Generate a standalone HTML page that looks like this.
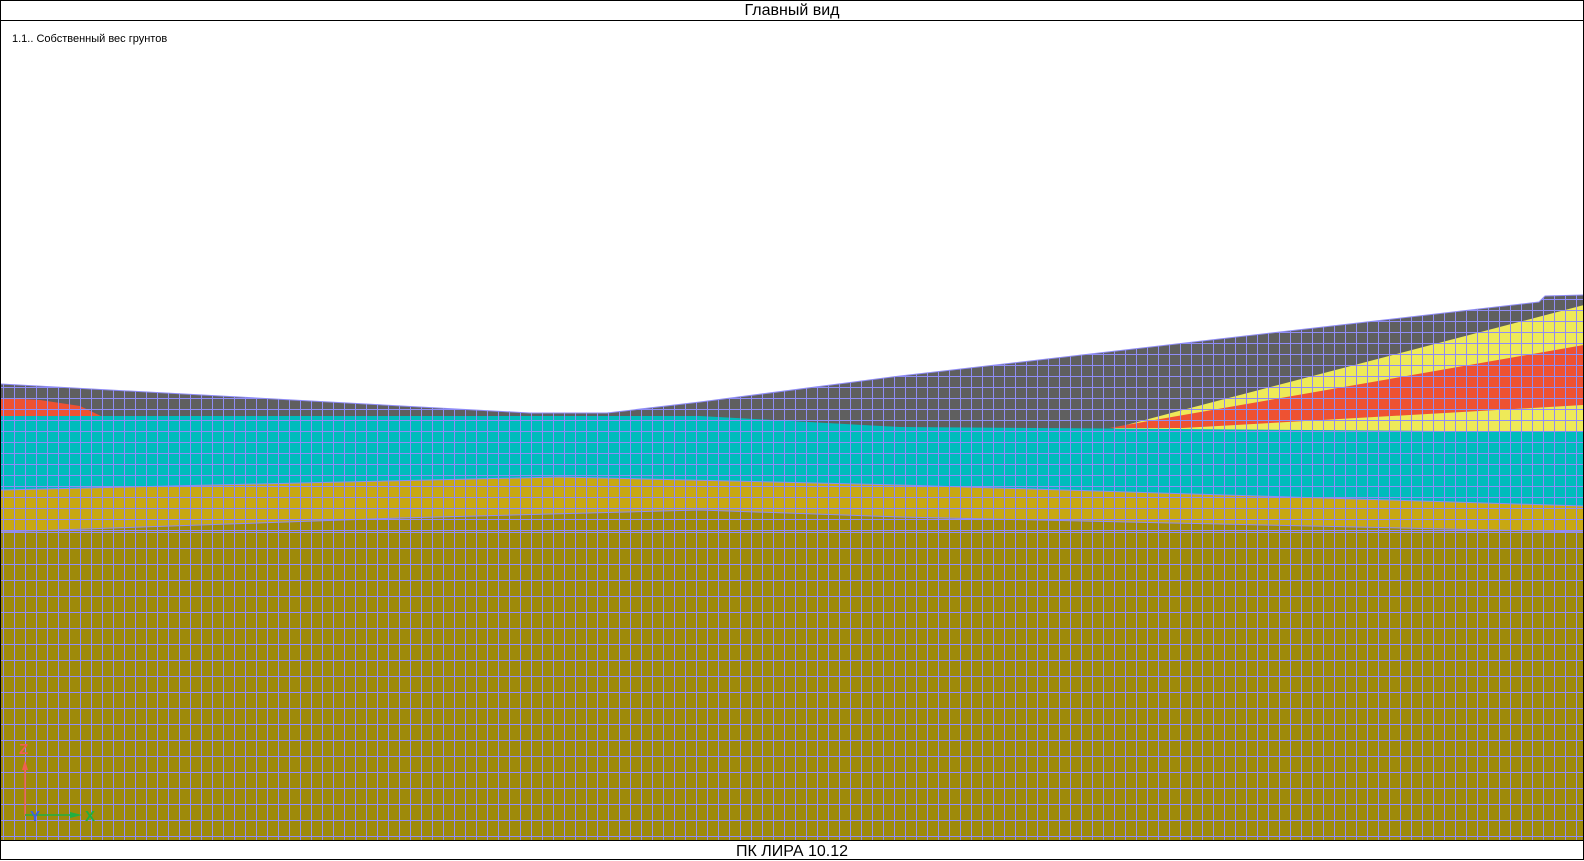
<!DOCTYPE html>
<html><head><meta charset="utf-8"><style>
html,body{margin:0;padding:0;background:#fff;}
body{width:1584px;height:860px;overflow:hidden;position:relative;font-family:"Liberation Sans",sans-serif;}
svg{position:absolute;left:0;top:0;}
.t{position:absolute;left:0;width:1584px;text-align:center;font-size:16px;color:#000;}
</style></head><body>
<svg width="1584" height="860" viewBox="0 0 1584 860">
<defs>
<pattern id="g" width="11" height="11" patternUnits="userSpaceOnUse" x="3" y="2">
<path d="M0.5 0V11M0 0.5H11" stroke="#8f8cf6" stroke-width="1" fill="none"/>
</pattern>
<pattern id="g2" width="11" height="16" patternUnits="userSpaceOnUse" x="3" y="4">
<path d="M0.5 0V16M0 0.5H11" stroke="#8f8cf6" stroke-width="1" fill="none"/>
</pattern>
<clipPath id="soil"><path d="M1 384 L530 413 L607 413 L700 402 L900 376 L1539 302 L1545 296 L1583 295 L1583 840 L1 840Z"/></clipPath>
</defs>
<rect x="0" y="0" width="1584" height="860" fill="#fff"/>
<g clip-path="url(#soil)">
<rect x="0" y="280" width="1584" height="560" fill="#5f5f5f"/>
<path d="M0 398 L40 400 L80 406 L103 417 L0 417Z" fill="#ee5232"/>
<path d="M1175 412 L1584 305 L1584 432 L1100 432Z" fill="#eeea58"/>
<path d="M1109 428 L1584 345 L1584 405 L1183 428Z" fill="#ee5232"/>
<path d="M0 416 L700 416 L900 427 L1584 432 L1584 506 L900 485 L560 477 L300 483 L0 490Z" fill="#00bcbc"/>
<path d="M0 490 L300 483 L560 477 L900 485 L1584 506 L1584 532 L900 517 L700 510 L400 518 L0 532Z" fill="#c8a812"/>
<path d="M0 532 L400 518 L700 510 L900 517 L1584 532 L1584 840 L0 840Z" fill="#9e8a0a"/>
<rect x="0" y="280" width="1584" height="252" fill="url(#g)"/>
<rect x="0" y="520" width="1584" height="320" fill="url(#g2)"/>
<path d="M0 532 L400 518 L700 510 L900 517 L1584 532" stroke="#8f8cf6" fill="none"/>
<path d="M0 490 L300 483 L560 477 L900 485 L1584 506" stroke="#8f8cf6" fill="none"/>
</g>
<path d="M1 384 L530 413 L607 413 L700 402 L900 376 L1539 302 L1545 296 L1583 295" stroke="#8f8cf6" fill="none"/>
<line x1="25" y1="816" x2="25" y2="765" stroke="#f06050" stroke-width="1.5"/>
<path d="M22 770 L25 760 L28 770Z" fill="#f06050"/>
<text x="19" y="754" font-size="15" font-weight="bold" fill="#f06050" font-family="Liberation Sans">Z</text>
<line x1="25" y1="815" x2="78" y2="815" stroke="#20b040" stroke-width="1.5"/>
<path d="M70 812 L82 815 L70 818Z" fill="#20b040"/>
<text x="85" y="821" font-size="15" font-weight="bold" fill="#20b040" font-family="Liberation Sans">X</text>
<text x="30" y="821" font-size="15" font-weight="bold" fill="#4060e0" font-family="Liberation Sans">Y</text>
<rect x="0.5" y="0.5" width="1583" height="859" fill="none" stroke="#000"/>
<line x1="0" y1="20.5" x2="1584" y2="20.5" stroke="#000"/>
<line x1="0" y1="840.5" x2="1584" y2="840.5" stroke="#000"/>
</svg>
<div class="t" style="top:2px;">Главный вид</div>
<div style="position:absolute;left:12px;top:33px;font-size:11px;color:#000;">1.1.. Собственный вес грунтов</div>
<div class="t" style="top:843px;">ПК ЛИРА 10.12</div>
</body></html>
